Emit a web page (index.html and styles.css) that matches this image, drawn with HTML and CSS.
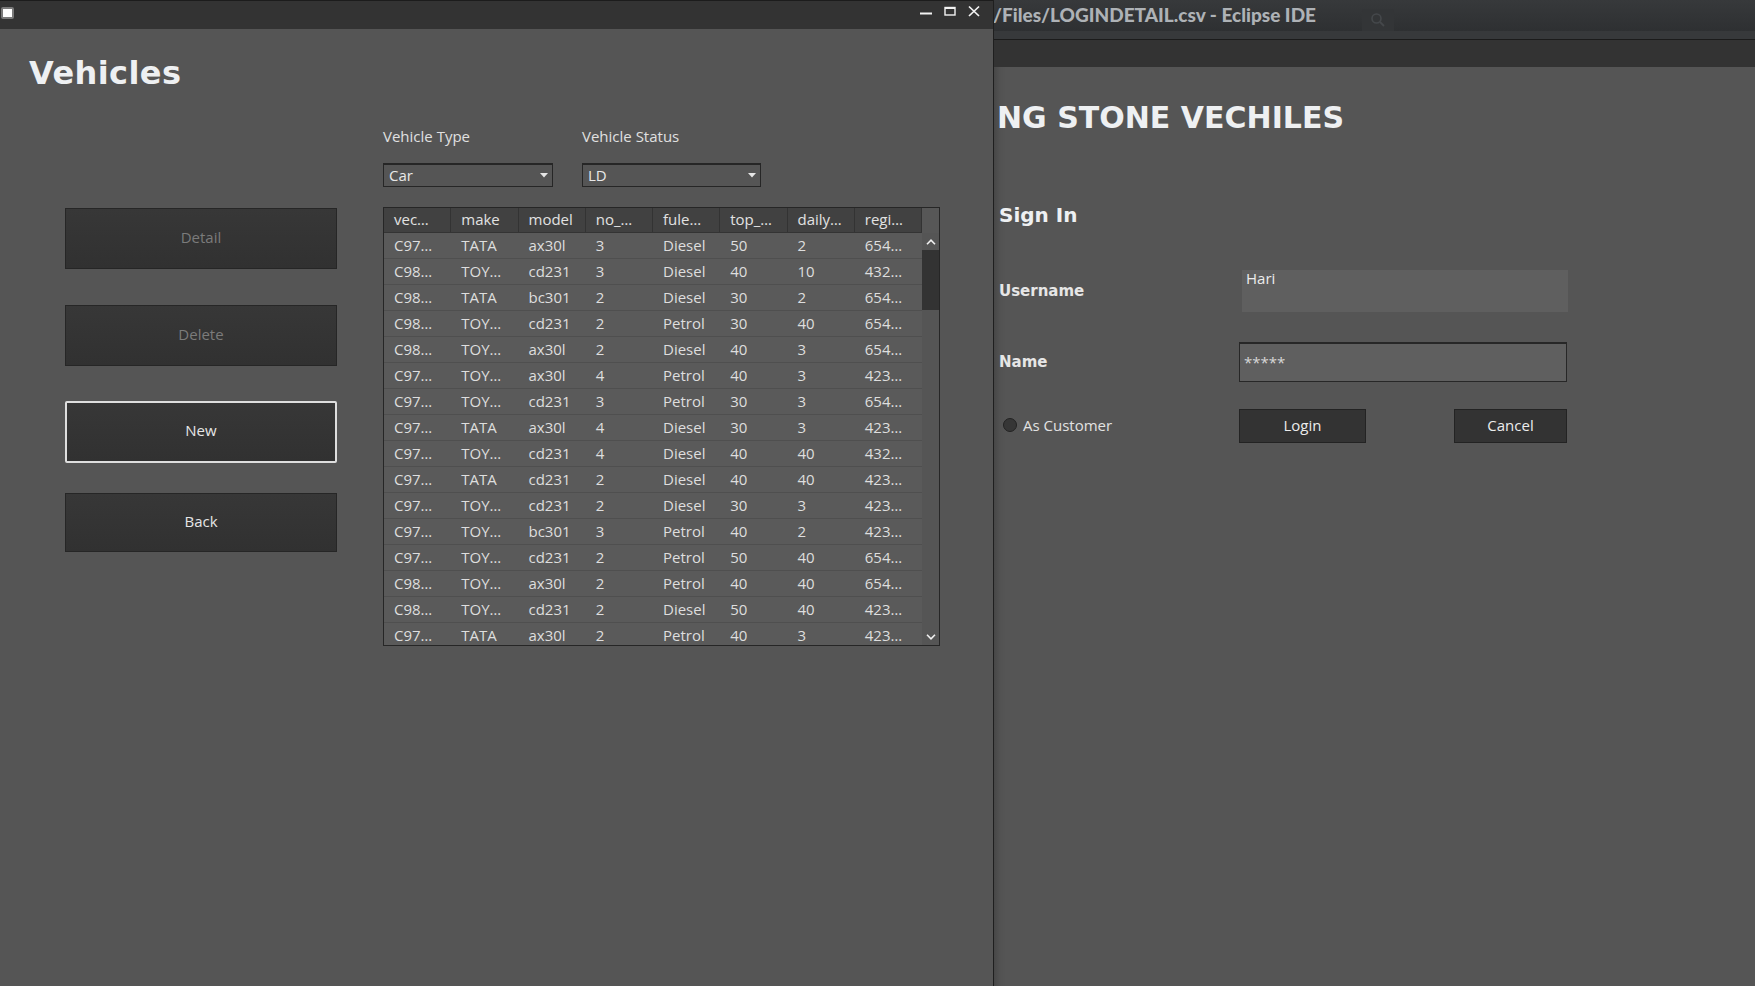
FILE: index.html
```html
<!DOCTYPE html>
<html lang="en">
<head>
<meta charset="utf-8">
<title>Vehicles</title>
<link rel="stylesheet" href="styles.css">
</head>
<body>
<div class="screen">
  <div class="app-window">
    <div class="titlebar">
      <span class="win-icon"></span>
      <div class="win-controls">
        <svg class="ctl" width="12" height="12" viewBox="0 0 12 12"><path d="M0 8.5H12" stroke="#f2f2f2" stroke-width="2"/></svg>
        <svg class="ctl" width="12" height="12" viewBox="0 0 12 12"><rect x="1" y="2.5" width="10" height="7.5" fill="none" stroke="#f2f2f2" stroke-width="1.4"/><path d="M1 3H11" stroke="#f2f2f2" stroke-width="2"/></svg>
        <svg class="ctl" width="12" height="12" viewBox="0 0 12 12"><path d="M1 1.5L11 11M11 1.5L1 11" stroke="#f2f2f2" stroke-width="1.7"/></svg>
      </div>
    </div>
    <div class="app-body">
      <h1 class="page-title">Vehicles</h1>
      <div class="main">
        <div class="actions">
          <button class="btn btn-disabled btn-detail">Detail</button>
          <button class="btn btn-disabled btn-delete">Delete</button>
          <button class="btn btn-focus btn-new">New</button>
          <button class="btn btn-back">Back</button>
        </div>
        <div class="data-panel">
          <div class="filters">
            <div class="filter filter-type">
              <div class="filter-label">Vehicle Type</div>
              <div class="combo"><span>Car</span><svg width="8" height="5" viewBox="0 0 8 5"><path d="M0 0H8L4 4.5Z" fill="#e6e6e6"/></svg></div>
            </div>
            <div class="filter filter-status">
              <div class="filter-label">Vehicle Status</div>
              <div class="combo"><span>LD</span><svg width="8" height="5" viewBox="0 0 8 5"><path d="M0 0H8L4 4.5Z" fill="#e6e6e6"/></svg></div>
            </div>
          </div>
          <div class="table">
            <div class="grid-area">
              <div class="thead">
                <span>vec…</span><span>make</span><span>model</span><span>no_…</span><span>fule…</span><span>top_…</span><span>daily…</span><span>regi…</span>
              </div>
              <div class="tbody">
                <div class="tr"><span>C97…</span><span>TATA</span><span>ax30l</span><span>3</span><span>Diesel</span><span>50</span><span>2</span><span>654…</span></div>
                <div class="tr"><span>C98…</span><span>TOY…</span><span>cd231</span><span>3</span><span>Diesel</span><span>40</span><span>10</span><span>432…</span></div>
                <div class="tr"><span>C98…</span><span>TATA</span><span>bc301</span><span>2</span><span>Diesel</span><span>30</span><span>2</span><span>654…</span></div>
                <div class="tr"><span>C98…</span><span>TOY…</span><span>cd231</span><span>2</span><span>Petrol</span><span>30</span><span>40</span><span>654…</span></div>
                <div class="tr"><span>C98…</span><span>TOY…</span><span>ax30l</span><span>2</span><span>Diesel</span><span>40</span><span>3</span><span>654…</span></div>
                <div class="tr"><span>C97…</span><span>TOY…</span><span>ax30l</span><span>4</span><span>Petrol</span><span>40</span><span>3</span><span>423…</span></div>
                <div class="tr"><span>C97…</span><span>TOY…</span><span>cd231</span><span>3</span><span>Petrol</span><span>30</span><span>3</span><span>654…</span></div>
                <div class="tr"><span>C97…</span><span>TATA</span><span>ax30l</span><span>4</span><span>Diesel</span><span>30</span><span>3</span><span>423…</span></div>
                <div class="tr"><span>C97…</span><span>TOY…</span><span>cd231</span><span>4</span><span>Diesel</span><span>40</span><span>40</span><span>432…</span></div>
                <div class="tr"><span>C97…</span><span>TATA</span><span>cd231</span><span>2</span><span>Diesel</span><span>40</span><span>40</span><span>423…</span></div>
                <div class="tr"><span>C97…</span><span>TOY…</span><span>cd231</span><span>2</span><span>Diesel</span><span>30</span><span>3</span><span>423…</span></div>
                <div class="tr"><span>C97…</span><span>TOY…</span><span>bc301</span><span>3</span><span>Petrol</span><span>40</span><span>2</span><span>423…</span></div>
                <div class="tr"><span>C97…</span><span>TOY…</span><span>cd231</span><span>2</span><span>Petrol</span><span>50</span><span>40</span><span>654…</span></div>
                <div class="tr"><span>C98…</span><span>TOY…</span><span>ax30l</span><span>2</span><span>Petrol</span><span>40</span><span>40</span><span>654…</span></div>
                <div class="tr"><span>C98…</span><span>TOY…</span><span>cd231</span><span>2</span><span>Diesel</span><span>50</span><span>40</span><span>423…</span></div>
                <div class="tr"><span>C97…</span><span>TATA</span><span>ax30l</span><span>2</span><span>Petrol</span><span>40</span><span>3</span><span>423…</span></div>
              </div>
            </div>
            <div class="vscroll">
              <div class="corner"></div>
              <div class="arrow"><svg width="10" height="6" viewBox="0 0 10 6"><path d="M1 5.2L5 1.2L9 5.2" fill="none" stroke="#f0f0f0" stroke-width="1.6"/></svg></div>
              <div class="thumb"></div>
              <div class="track"></div>
              <div class="arrow"><svg width="10" height="6" viewBox="0 0 10 6"><path d="M1 0.8L5 4.8L9 0.8" fill="none" stroke="#f0f0f0" stroke-width="1.6"/></svg></div>
            </div>
          </div>
        </div>
      </div>
    </div>
  </div>
  <div class="eclipse">
    <div class="eclipse-titlebar">
      <div class="eclipse-title">/Files/LOGINDETAIL.csv - Eclipse IDE</div>
      <div class="search-box"><svg width="16" height="16" viewBox="0 0 16 16"><circle cx="6.5" cy="6.5" r="4.5" fill="none" stroke="#45484b" stroke-width="1.6"/><path d="M10 10L14 14" stroke="#45484b" stroke-width="1.8"/></svg></div>
    </div>
    <div class="eclipse-strip"></div>
    <div class="eclipse-toolbar"></div>
    <div class="login-window">
      <div class="brand">NG STONE VECHILES</div>
      <div class="signin">Sign In</div>
      <div class="login-form">
        <div class="form-label">Username</div>
        <div class="field field-user">Hari</div>
        <div class="form-label">Name</div>
        <div class="field field-pass">*****</div>
        <div class="radio-row"><span class="radio"></span><span class="radio-text">As Customer</span></div>
        <div class="form-buttons">
          <button class="lbtn lbtn-login">Login</button>
          <button class="lbtn lbtn-cancel">Cancel</button>
        </div>
      </div>
    </div>
  </div>
</div>
</body>
</html>
```

FILE: styles.css
```css
* { box-sizing: border-box; }
html, body { margin: 0; padding: 0; }
body {
  width: 1755px;
  height: 986px;
  overflow: hidden;
  background: #555555;
  font-family: "Open Sans", "Liberation Sans", sans-serif;
  font-size: 15px;
  color: #e2e2e2;
}
.screen { display: flex; width: 1755px; height: 986px; }

/* ---------- left app window ---------- */
.app-window {
  width: 994px;
  height: 986px;
  border-right: 1px solid #1f1f1f;
  background: #555555;
  display: flex;
  flex-direction: column;
  flex: none;
}
.titlebar {
  height: 29px;
  flex: none;
  background: #333333;
  border-top: 1px solid #1c1c1c;
  display: flex;
  align-items: flex-start;
}
.win-icon {
  width: 13px;
  height: 12px;
  margin: 6px 0 0 1px;
  background: #ffffff;
  border: 2px solid #7a7a7a;
  border-radius: 2px;
}
.win-controls {
  margin-left: auto;
  margin-right: 13px;
  margin-top: 4px;
  display: flex;
  gap: 12px;
}
.ctl { display: block; }

.app-body { padding: 25px 0 0 29px; }
.page-title {
  margin: 0;
  font-family: "DejaVu Sans", sans-serif;
  font-weight: bold;
  font-size: 32px;
  line-height: 38px;
  letter-spacing: 0.4px;
  color: #eef0f2;
}
.main { display: flex; margin-top: 35px; }
.actions {
  width: 272px;
  margin-left: 36px;
  padding-top: 81px;
  display: flex;
  flex-direction: column;
  flex: none;
}
.btn {
  display: block;
  width: 272px;
  height: 61px;
  padding: 0 0 4px 0;
  background: linear-gradient(#373737, #313131);
  border: 1px solid #262626;
  font-family: "Open Sans", sans-serif;
  font-size: 15px;
  color: #e6e6e6;
}
.btn-disabled { color: #7b7b7b; }
.btn-delete { margin-top: 36px; }
.btn-new { margin-top: 35px; height: 62px; }
.btn-focus { border: 2px solid #dedede; border-radius: 2px; }
.btn-back { margin-top: 30px; height: 59px; }

.data-panel { margin-left: 46px; width: 557px; }
.filters { display: flex; gap: 29px; }
.filter-type { width: 170px; }
.filter-status { width: 179px; }
.filter-label { line-height: 18px; color: #e0e0e0; }
.combo {
  margin-top: 18px;
  height: 24px;
  border: 1px solid #262626;
  border-top-width: 2px;
  background: #555555;
  display: flex;
  align-items: center;
  justify-content: space-between;
  padding: 0 4px 2px 5px;
  line-height: 20px;
  color: #e8e8e8;
}
.combo svg { display: block; margin-top: 2px; }

.table {
  margin-top: 20px;
  width: 557px;
  height: 439px;
  border: 1px solid #262626;
  display: flex;
}
.grid-area { width: 538px; flex: none; }
.thead {
  display: grid;
  grid-template-columns: repeat(8, 1fr);
  height: 25px;
  background: #414141;
  border-bottom: 1px solid #343434;
}
.thead span {
  border-right: 1px solid #333333;
  padding-left: 10px;
  line-height: 22px;
  white-space: nowrap;
  overflow: hidden;
  color: #e2e2e2;
}
.tbody { height: 412px; overflow: hidden; }
.tr {
  display: grid;
  grid-template-columns: repeat(8, 1fr);
  height: 26px;
  background: #5a5a5a;
  border-bottom: 1px solid #4f4f4f;
}
.tr span {
  padding-left: 10px;
  line-height: 25px;
  white-space: nowrap;
  overflow: hidden;
  color: #dedede;
}
.vscroll {
  width: 17px;
  flex: none;
  display: flex;
  flex-direction: column;
  background: #555555;
}
.corner { height: 25px; flex: none; background: #575757; }
.arrow {
  height: 17px;
  flex: none;
  display: flex;
  align-items: center;
  justify-content: center;
}
.thumb { height: 60px; flex: none; background: #333333; }
.track { flex: 1; }

/* ---------- eclipse / login side ---------- */
.eclipse {
  flex: 1;
  display: flex;
  flex-direction: column;
  height: 986px;
  overflow: hidden;
}
.eclipse-titlebar {
  height: 31px;
  flex: none;
  background: linear-gradient(#37393b, #2e3032);
  display: grid;
  grid-template-columns: 368px 32px;
}
.eclipse-title {
  font-family: "Lato", sans-serif;
  font-weight: 900;
  font-size: 19px;
  line-height: 29px;
  color: #aeb2b6;
  white-space: nowrap;
  margin-left: -1px;
}
.search-box {
  margin-top: 9px;
  height: 22px;
  background: #333537;
  border-radius: 3px 3px 0 0;
  display: flex;
  align-items: center;
  justify-content: center;
}
.eclipse-strip {
  height: 9px;
  flex: none;
  background: #37393b;
  border-bottom: 1px solid #1b1b1b;
}
.eclipse-toolbar { height: 27px; flex: none; background: #333333; }
.login-window {
  flex: 1;
  background: linear-gradient(to right, #474747 0, #525252 6px, #555555 12px);
}
.brand {
  margin-top: 33px;
  padding-left: 3px;
  font-family: "DejaVu Sans", sans-serif;
  font-weight: bold;
  font-size: 30px;
  line-height: 36px;
  color: #eef0f2;
  white-space: nowrap;
}
.signin {
  margin-top: 67px;
  padding-left: 5px;
  font-family: "DejaVu Sans", sans-serif;
  font-weight: bold;
  font-size: 20px;
  line-height: 24px;
  color: #eef0f2;
}
.login-form {
  margin-top: 43px;
  display: grid;
  grid-template-columns: 240px 328px;
  grid-template-rows: 42px 40px 34px;
  row-gap: 30px;
  padding-left: 5px;
}
.form-label {
  align-self: center;
  font-family: "DejaVu Sans", sans-serif;
  font-weight: bold;
  font-size: 15px;
  color: #e6e6e6;
}
.field {
  background: #5f5f5f;
  color: #ececec;
}
.field-user {
  margin-left: 3px;
  width: 326px;
  padding-left: 4px;
  line-height: 17px;
}
.field-pass {
  border: 1px solid #272727;
  border-top-width: 2px;
  padding-left: 4px;
  line-height: 36px;
  color: #d6d6d6;
}
.radio-row {
  display: flex;
  align-items: center;
  gap: 6px;
  padding-left: 4px;
  margin-top: -9px;
}
.radio {
  width: 14px;
  height: 14px;
  border-radius: 50%;
  background: #363636;
  border: 1px solid #222222;
}
.radio-text { color: #e2e2e2; }
.form-buttons {
  display: flex;
  justify-content: space-between;
  margin-top: -3px;
}
.lbtn {
  height: 34px;
  padding: 0 0 2px 0;
  background: #333333;
  border: 1px solid #232323;
  font-family: "Open Sans", sans-serif;
  font-size: 15px;
  color: #ececec;
}
.lbtn-login { width: 127px; }
.lbtn-cancel { width: 113px; }
```
